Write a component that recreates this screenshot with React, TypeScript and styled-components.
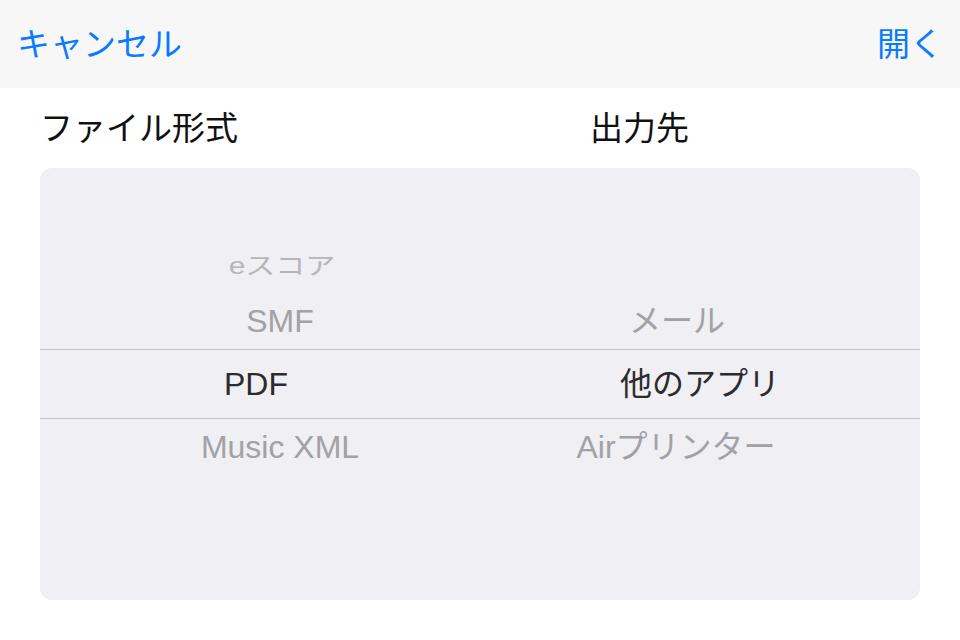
import styled, { createGlobalStyle } from "styled-components"

const Global = createGlobalStyle`
  html, body {
    margin: 0;
    padding: 0;
    background: #ffffff;
    font-family: "Liberation Sans", "Noto Sans CJK JP", sans-serif;
  }
`

const Page = styled.div`
  width: 960px;
  height: 640px;
  display: flex;
  flex-direction: column;
  background: #fff;
`

const NavBar = styled.header`
  height: 88px;
  background: #f7f7f7;
  display: flex;
  align-items: center;
  justify-content: space-between;
  padding: 0 17px 0 17px;
  box-sizing: border-box;
`

const NavButton = styled.button`
  border: none;
  background: none;
  padding: 0;
  color: #0a7aff;
  font-family: inherit;
  font-size: 33px;
  line-height: 1;
`

const Body = styled.main`
  padding: 0 40px;
  display: flex;
  flex-direction: column;
`

const Labels = styled.div`
  display: grid;
  grid-template-columns: 1fr 1fr;
  height: 80px;
  align-items: center;
`

const Label = styled.h2<{ $indent: number }>`
  margin: 0;
  padding-left: ${(p) => p.$indent}px;
  font-size: 33px;
  font-weight: 400;
  color: #111;
  line-height: 1;
`

const Picker = styled.section`
  height: 432px;
  border-radius: 12px;
  background: #efeff4;
  display: grid;
  grid-template-columns: 1fr 1fr;
  overflow: hidden;
`

const Wheel = styled.div`
  display: flex;
  flex-direction: column;
  justify-content: center;
`

const Row = styled.div<{ $h: number; $selected?: boolean }>`
  height: ${(p) => p.$h}px;
  display: flex;
  align-items: center;
  justify-content: center;
  box-sizing: border-box;
  border-top: ${(p) => (p.$selected ? "1px solid #c4c4c8" : "none")};
  border-bottom: ${(p) => (p.$selected ? "1px solid #c4c4c8" : "none")};
`

type Tone = "far" | "near" | "selected"

const Item = styled.span<{ $tone: Tone; $shift: number }>`
  display: inline-block;
  transform: translateX(${(p) => p.$shift}px)
    ${(p) => (p.$tone === "far" ? "scaleY(0.78)" : "")};
  font-size: ${(p) => (p.$tone === "far" ? 30 : 32)}px;
  color: ${(p) => (p.$tone === "selected" ? "#2c2c2e" : p.$tone === "near" ? "#a2a2a6" : "#b6b6ba")};
  line-height: 1;
  white-space: nowrap;
`

export default function App() {
  return (
    <Page>
      <Global />
      <NavBar>
        <NavButton>キャンセル</NavButton>
        <NavButton>開く</NavButton>
      </NavBar>

      <Body>
        <Labels>
          <Label $indent={0}>ファイル形式</Label>
          <Label $indent={110}>出力先</Label>
        </Labels>

        <Picker>
          <Wheel>
            <Row $h={54}><Item $tone="far" $shift={22}>eスコア</Item></Row>
            <Row $h={56}><Item $tone="near" $shift={20}>SMF</Item></Row>
            <Row $h={70} $selected><Item $tone="selected" $shift={-4}>PDF</Item></Row>
            <Row $h={56}><Item $tone="near" $shift={20}>Music XML</Item></Row>
            <Row $h={54} />
          </Wheel>
          <Wheel>
            <Row $h={54} />
            <Row $h={56}><Item $tone="near" $shift={-23}>メール</Item></Row>
            <Row $h={70} $selected><Item $tone="selected" $shift={0}>他のアプリ</Item></Row>
            <Row $h={56}><Item $tone="near" $shift={-24}>Airプリンター</Item></Row>
            <Row $h={54} />
          </Wheel>
        </Picker>
      </Body>
    </Page>
  )
}
